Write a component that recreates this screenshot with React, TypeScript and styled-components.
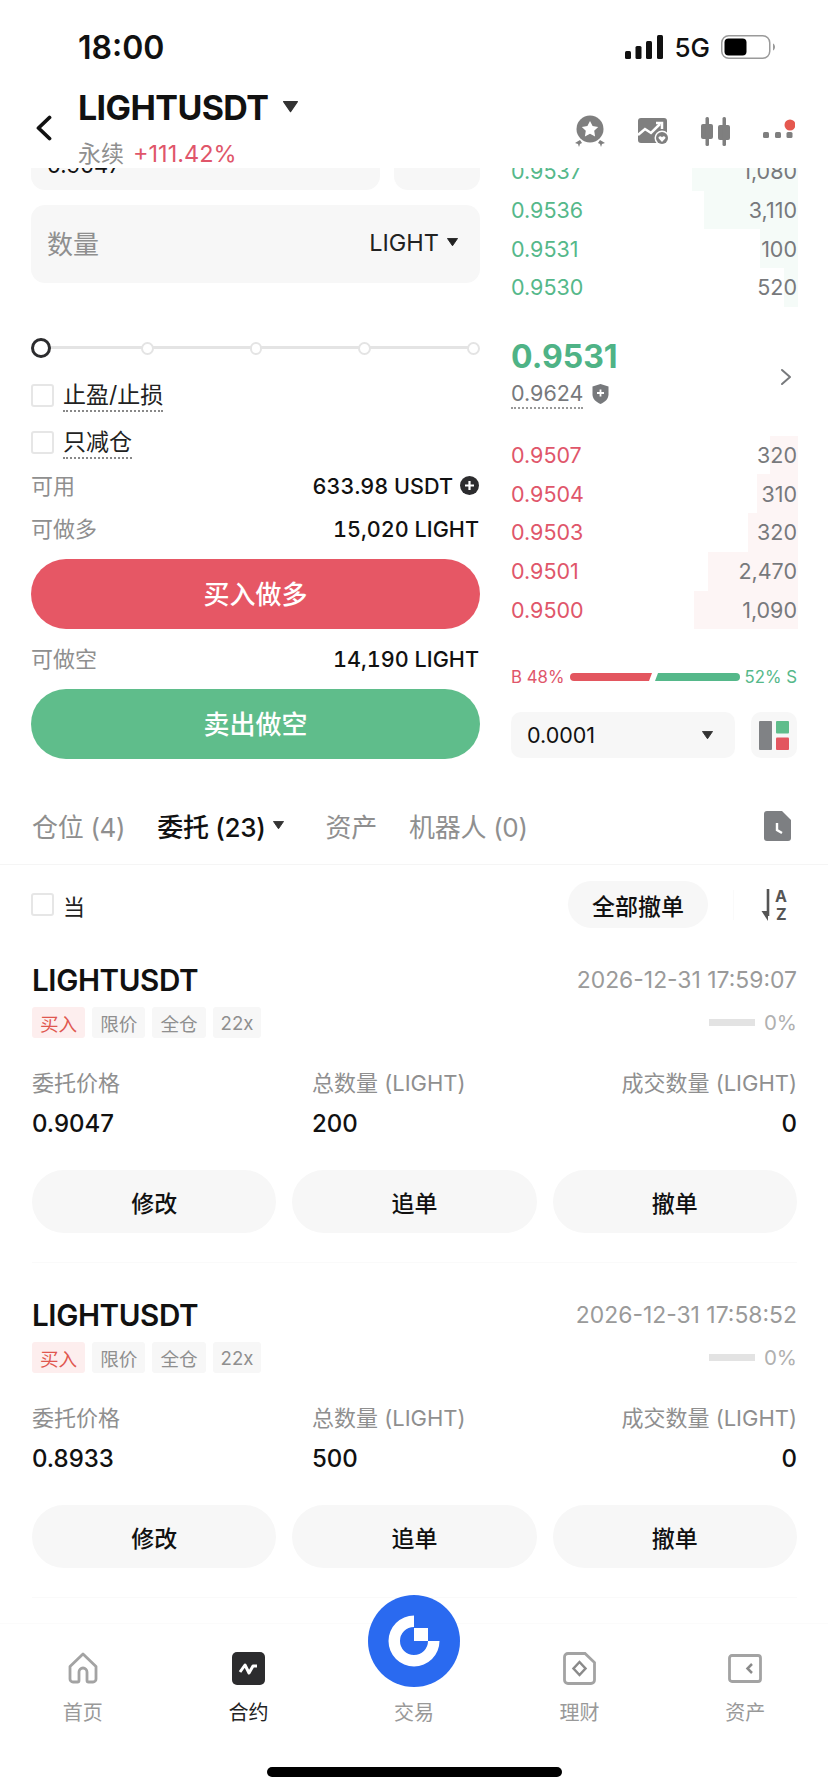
import React from 'react';
import styled, { createGlobalStyle } from 'styled-components';

const RED = '#e0566a';
const GREEN = '#55b88a';
const GRAY = '#8f8f8f';
const SOFT = '#f7f7f7';

const GlobalStyle = createGlobalStyle`
  html, body {
    margin: 0;
    padding: 0;
    background: #fff;
  }
  * {
    box-sizing: border-box;
  }
`;

const bids = [
  { price: '0.9537', size: '1,080', depth: 106 },
  { price: '0.9536', size: '3,110', depth: 94 },
  { price: '0.9531', size: '100', depth: 38 },
  { price: '0.9530', size: '520', depth: 14 },
];

const asks = [
  { price: '0.9507', size: '320', depth: 28 },
  { price: '0.9504', size: '310', depth: 41 },
  { price: '0.9503', size: '320', depth: 50 },
  { price: '0.9501', size: '2,470', depth: 90 },
  { price: '0.9500', size: '1,090', depth: 104 },
];

const orders = [
  { time: '2026-12-31 17:59:07', price: '0.9047', amount: '200' },
  { time: '2026-12-31 17:58:52', price: '0.8933', amount: '500' },
];

const Caret = ({ size = 12, color = '#333' }: { size?: number; color?: string }) => (
  <svg width={size} height={size * 0.75} viewBox="0 0 12 9">
    <path d="M0.5 0.5h11L6 8.5z" fill={color} stroke={color} strokeLinejoin="round" />
  </svg>
);

const App: React.FC = () => {
  return (
    <Page>
      <GlobalStyle />
      <StatusBar>
        <Clock>18:00</Clock>
        <StatusRight>
          <svg width="38" height="24" viewBox="0 0 38 24">
            <rect x="0" y="16" width="6" height="8" rx="1.5" fill="#111" />
            <rect x="10.5" y="11" width="6" height="13" rx="1.5" fill="#111" />
            <rect x="21" y="6" width="6" height="18" rx="1.5" fill="#111" />
            <rect x="32" y="0" width="6" height="24" rx="1.5" fill="#111" />
          </svg>
          <Network>5G</Network>
          <svg width="54" height="24" viewBox="0 0 54 24">
            <rect x="0.75" y="0.75" width="48" height="22.5" rx="7" fill="none" stroke="#9a9a9a" strokeWidth="1.5" />
            <rect x="3.5" y="3.5" width="22" height="17" rx="4" fill="#000" />
            <path d="M52 8.5c1.4.6 2 2 2 3.5s-.6 2.9-2 3.5z" fill="#9a9a9a" />
          </svg>
        </StatusRight>
      </StatusBar>

      <Header>
        <BackIcon width="20" height="26" viewBox="0 0 20 26">
          <path d="M15.5 2.5 4.5 13l11 10.5" fill="none" stroke="#111" strokeWidth="3.8" strokeLinecap="round" strokeLinejoin="round" />
        </BackIcon>
        <HeaderTitle>
          <SymbolRow>
            <Symbol>LIGHTUSDT</Symbol>
            <Caret size={15} color="#333" />
          </SymbolRow>
          <SubRow>
            <SubLabel>永续</SubLabel>
            <Change>+111.42%</Change>
          </SubRow>
        </HeaderTitle>
        <HeaderIcons>
          <svg width="34" height="34" viewBox="0 0 34 34">
            <circle cx="17" cy="14" r="13.5" fill="#7f7f7f" />
            <path d="M17 6l2.6 5.1 5.6.8-4 3.900.9 5.600-5.100-2.600-5.100 2.600.9-5.600-4-3.900 5.600-.8z" fill="#fff" />
            <path d="M2 28l5-3 2 3-2 1-1 3-1-3zM32 28l-5-3-2 3 2 1 1 3 1-3z" fill="#7f7f7f" />
          </svg>
          <svg width="32" height="28" viewBox="0 0 32 28">
            <rect x="0" y="0" width="29" height="25" rx="3" fill="#7f7f7f" />
            <path d="M0 17l7-6 6 4 9-9" fill="none" stroke="#fff" strokeWidth="2.5" />
            <path d="M18 5h6v6" fill="none" stroke="#fff" strokeWidth="2.5" />
            <circle cx="24" cy="20" r="7.5" fill="#fff" />
            <circle cx="24" cy="20" r="6" fill="#7f7f7f" />
            <path d="M24 24l-3.2-3.4c-1.2-1.7 1.600-3.400 3.200-1.400 1.600-2 4.400-.3 3.200 1.400z" fill="#fff" />
          </svg>
          <svg width="30" height="30" viewBox="0 0 30 30">
            <rect x="0" y="7" width="12" height="15" rx="2" fill="#7f7f7f" />
            <rect x="4.5" y="0" width="3.5" height="29" rx="1.5" fill="#7f7f7f" />
            <rect x="17" y="8" width="12" height="15" rx="2" fill="#7f7f7f" />
            <rect x="21.5" y="0" width="3.5" height="29" rx="1.5" fill="#7f7f7f" />
          </svg>
          <MoreIcon width="32" height="26" viewBox="0 0 32 26">
            <rect x="0" y="13" width="6" height="6" rx="1.5" fill="#7f7f7f" />
            <rect x="12" y="13" width="6" height="6" rx="1.5" fill="#7f7f7f" />
            <rect x="23.5" y="13" width="6" height="6" rx="1.5" fill="#7f7f7f" />
            <circle cx="27" cy="6" r="5.5" fill="#e5584f" />
          </MoreIcon>
        </HeaderIcons>
      </Header>

      <Body>
        <Scrolled>
          <TradePanel>
            <FormColumn>
              <PriceRow>
                <PriceBox>0.9047</PriceBox>
                <PriceTypeBox />
              </PriceRow>
              <AmountBox>
                <AmountLabel>数量</AmountLabel>
                <AmountUnit>
                  LIGHT
                  <Caret size={11} color="#222" />
                </AmountUnit>
              </AmountBox>

              <Slider>
                <SliderHandle />
                <SliderNode />
                <SliderNode />
                <SliderNode />
                <SliderNode />
              </Slider>

              <CheckRow $first>
                <CheckBox />
                <CheckLabel>止盈/止损</CheckLabel>
              </CheckRow>
              <CheckRow>
                <CheckBox />
                <CheckLabel>只减仓</CheckLabel>
              </CheckRow>

              <InfoRow $top={18}>
                <InfoLabel>可用</InfoLabel>
                <InfoValue>
                  633.98 USDT
                  <svg width="19" height="19" viewBox="0 0 19 19">
                    <circle cx="9.5" cy="9.5" r="9.5" fill="#2c2c2e" />
                    <path d="M9.5 5v9M5 9.5h9" stroke="#fff" strokeWidth="2.2" />
                  </svg>
                </InfoValue>
              </InfoRow>
              <InfoRow $top={13}>
                <InfoLabel>可做多</InfoLabel>
                <InfoValue>15,020 LIGHT</InfoValue>
              </InfoRow>
              <TradeButton $color="#e65765">买入做多</TradeButton>
              <InfoRow $top={15}>
                <InfoLabel>可做空</InfoLabel>
                <InfoValue>14,190 LIGHT</InfoValue>
              </InfoRow>
              <TradeButton $color="#5fbd8b">卖出做空</TradeButton>
            </FormColumn>

            <BookColumn>
              {bids.map((row) => (
                <BookRow key={row.price}>
                  <Depth $color="#f5fbf8" style={{ width: row.depth }} />
                  <BookPrice $color={GREEN}>{row.price}</BookPrice>
                  <BookSize>{row.size}</BookSize>
                </BookRow>
              ))}
              <MidBlock>
                <MidLeft>
                  <LastPrice>0.9531</LastPrice>
                  <MarkRow>
                    <MarkPrice>0.9624</MarkPrice>
                    <svg width="17" height="20" viewBox="0 0 17 20">
                      <path d="M8.5 0l8 2.5v8c0 4.5-3.5 7.5-8 9.5-4.5-2-8-5-8-9.5v-8z" fill="#77797c" />
                      <path d="M8.5 5.5v7M5 9h7" stroke="#fff" strokeWidth="1.8" />
                    </svg>
                  </MarkRow>
                </MidLeft>
                <svg width="12" height="18" viewBox="0 0 12 18">
                  <path d="M2 2l8 7-8 7" fill="none" stroke="#77797c" strokeWidth="2" strokeLinecap="round" strokeLinejoin="round" />
                </svg>
              </MidBlock>
              {asks.map((row) => (
                <BookRow key={row.price}>
                  <Depth $color="#fdf5f5" style={{ width: row.depth }} />
                  <BookPrice $color={RED}>{row.price}</BookPrice>
                  <BookSize>{row.size}</BookSize>
                </BookRow>
              ))}
              <RatioRow>
                <RatioText $color={RED}>B 48%</RatioText>
                <RatioBars>
                  <svg width="170" height="8" viewBox="0 0 170 8">
                    <path d="M4 0H82L79 8H4a4 4 0 0 1 0-8z" fill="#e3565f" />
                    <path d="M88 0H166a4 4 0 0 1 0 8H85z" fill="#55b88a" />
                  </svg>
                </RatioBars>
                <RatioText $color={GREEN}>52% S</RatioText>
              </RatioRow>
              <TickRow>
                <TickSelect>
                  0.0001
                  <Caret size={11} color="#333" />
                </TickSelect>
                <LayoutButton>
                  <svg width="30" height="29" viewBox="0 0 30 29">
                    <rect x="0" y="0" width="13" height="29" rx="1" fill="#808285" />
                    <rect x="17" y="0" width="13" height="12.5" rx="1" fill="#5fbd8b" />
                    <rect x="17" y="16.5" width="13" height="12.5" rx="1" fill="#e3565f" />
                  </svg>
                </LayoutButton>
              </TickRow>
            </BookColumn>
          </TradePanel>

          <Tabs>
            <TabLabel>仓位 (4)</TabLabel>
            <TabLabel $active>
              委托 (23)
              <Caret size={11} color="#333" />
            </TabLabel>
            <TabLabel>资产</TabLabel>
            <TabLabel>机器人 (0)</TabLabel>
            <TabAction>
              <svg width="27" height="30" viewBox="0 0 27 30">
                <path d="M3 0h15l9 9v18a3 3 0 0 1-3 3H3a3 3 0 0 1-3-3V3a3 3 0 0 1 3-3z" fill="#7d7f82" />
                <path d="M13 12v7l5 3" fill="none" stroke="#fff" strokeWidth="2.4" />
              </svg>
            </TabAction>
          </Tabs>

          <FilterRow>
            <CheckBox />
            <FilterLabel>当</FilterLabel>
            <FilterActions>
              <CancelAll>全部撤单</CancelAll>
              <Separator />
              <svg width="30" height="32" viewBox="0 0 30 32">
                <path d="M7 0v27" stroke="#555" strokeWidth="2.6" />
                <path d="M0.5 22l6.5 10v-10z" fill="#555" />
                <text x="14" y="13" fontFamily="Inter, sans-serif" fontSize="16" fontWeight="700" fill="#555">A</text>
                <text x="15" y="31" fontFamily="Inter, sans-serif" fontSize="16" fontWeight="700" fill="#555">Z</text>
              </svg>
            </FilterActions>
          </FilterRow>

          {orders.map((order) => (
            <OrderCard key={order.time}>
              <OrderHead>
                <OrderSymbol>LIGHTUSDT</OrderSymbol>
                <OrderTime>{order.time}</OrderTime>
              </OrderHead>
              <TagRow>
                <Tag $buy>买入</Tag>
                <Tag>限价</Tag>
                <Tag>全仓</Tag>
                <Tag>22x</Tag>
                <Progress>
                  <ProgressBar />
                  0%
                </Progress>
              </TagRow>
              <Figures>
                <FigureLabel>委托价格</FigureLabel>
                <FigureLabel>总数量 (LIGHT)</FigureLabel>
                <FigureLabel $right>成交数量 (LIGHT)</FigureLabel>
                <FigureValue>{order.price}</FigureValue>
                <FigureValue>{order.amount}</FigureValue>
                <FigureValue $right>0</FigureValue>
              </Figures>
              <OrderActions>
                <OrderButton>修改</OrderButton>
                <OrderButton>追单</OrderButton>
                <OrderButton>撤单</OrderButton>
              </OrderActions>
            </OrderCard>
          ))}
        </Scrolled>
      </Body>

      <NavBar>
        <NavItems>
          <NavItem>
            <NavIcon>
              <svg width="32" height="32" viewBox="0 0 32 32">
                <path d="M16 2 3 14.5V27a3 3 0 0 0 3 3h4.5c.9 0 1.500-.6 1.500-1.500V20a4 4 0 0 1 8 0v8.500c0 .9.600 1.500 1.500 1.500H26a3 3 0 0 0 3-3V14.500z" fill="none" stroke="#a3a3a3" strokeWidth="2.8" strokeLinejoin="round" />
              </svg>
            </NavIcon>
            <NavLabel>首页</NavLabel>
          </NavItem>
          <NavItem>
            <NavIcon>
              <svg width="33" height="33" viewBox="0 0 33 33">
                <rect width="33" height="33" rx="5" fill="#2c2c2e" />
                <path d="M8 20l5-7 4 8 4-7h4" fill="none" stroke="#fff" strokeWidth="3" strokeLinejoin="round" />
              </svg>
            </NavIcon>
            <NavLabel $active>合约</NavLabel>
          </NavItem>
          <NavItem>
            <TradeLogo>
              <svg width="54" height="54" viewBox="-27 -27 54 54">
                <path d="M0 -25.5A25.5 25.5 0 1 0 25.5 0H14A14 14 0 1 1 0 -14z" fill="#fff" />
                <rect x="0" y="-13" width="14" height="13" fill="#fff" />
              </svg>
            </TradeLogo>
            <NavIcon />
            <NavLabel>交易</NavLabel>
          </NavItem>
          <NavItem>
            <NavIcon>
              <svg width="33" height="33" viewBox="0 0 33 33">
                <path d="M5 1.5h17l9.5 9V28a3.5 3.5 0 0 1-3.5 3.5H5A3.5 3.5 0 0 1 1.5 28V5A3.5 3.5 0 0 1 5 1.5z" fill="none" stroke="#a3a3a3" strokeWidth="2.8" />
                <path d="M16.5 10l6 6.5-6 6.5-6-6.5z" fill="none" stroke="#8a8a8a" strokeWidth="2.5" />
              </svg>
            </NavIcon>
            <NavLabel>理财</NavLabel>
          </NavItem>
          <NavItem>
            <NavIcon>
              <svg width="34" height="29" viewBox="0 0 34 29">
                <rect x="1.5" y="1.5" width="31" height="26" rx="2.5" fill="none" stroke="#a3a3a3" strokeWidth="2.8" />
                <path d="M24 10l-4.5 4.5L24 19" fill="none" stroke="#8a8a8a" strokeWidth="2.5" />
              </svg>
            </NavIcon>
            <NavLabel>资产</NavLabel>
          </NavItem>
        </NavItems>
        <HomeBar />
      </NavBar>
    </Page>
  );
};

export default App;

const Page = styled.div`
  position: relative;
  width: 828px;
  height: 1792px;
  display: flex;
  flex-direction: column;
  overflow: hidden;
  background: #fff;
  color: #111;
  font-family: Inter, 'Noto Sans CJK SC', sans-serif;
`;

const StatusBar = styled.div`
  height: 88px;
  padding: 29px 53px 0 78px;
  display: flex;
  justify-content: space-between;
  align-items: flex-start;
  flex-shrink: 0;
`;

const Clock = styled.div`
  font-size: 32px;
  font-weight: 600;
  line-height: 38px;
  color: #111;
`;

const StatusRight = styled.div`
  display: flex;
  align-items: center;
  gap: 11px;
  height: 24px;
  margin-top: 6px;
`;

const Network = styled.span`
  font-size: 26px;
  font-weight: 500;
  color: #111;
`;

const Header = styled.div`
  height: 80px;
  padding-left: 34px;
  position: relative;
  display: flex;
  flex-shrink: 0;
`;

const BackIcon = styled.svg`
  margin-top: 27px;
  flex-shrink: 0;
`;

const HeaderTitle = styled.div`
  margin-left: 24px;
`;

const SymbolRow = styled.div`
  display: flex;
  align-items: center;
  gap: 15px;
  height: 36px;
  margin-top: 1px;
`;

const Symbol = styled.div`
  font-size: 34px;
  font-weight: 700;
  letter-spacing: -0.6px;
`;

const SubRow = styled.div`
  display: flex;
  align-items: center;
  gap: 9px;
  margin-top: 13px;
  height: 28px;
`;

const SubLabel = styled.span`
  font-size: 23px;
  color: ${GRAY};
`;

const Change = styled.span`
  font-size: 23.5px;
  margin-top: 2px;
  color: ${RED};
`;

const HeaderIcons = styled.div`
  margin-left: auto;
  margin-right: 33px;
  height: 52px;
  display: flex;
  align-items: center;
  gap: 31px;
  margin-top: 18px;
`;

const MoreIcon = styled.svg`
  margin-left: 1px;
`;

const Body = styled.div`
  flex: 1;
  overflow: hidden;
  min-height: 0;
`;

const Scrolled = styled.div`
  margin-top: -28px;
`;

const TradePanel = styled.div`
  display: grid;
  grid-template-columns: 449px 286px;
  column-gap: 31px;
  padding-left: 31px;
`;

const FormColumn = styled.div`
  display: flex;
  flex-direction: column;
`;

const PriceRow = styled.div`
  display: flex;
  gap: 14px;
  height: 50px;
`;

const PriceBox = styled.div`
  flex: 1;
  background: ${SOFT};
  border-radius: 0 0 14px 14px;
  padding-left: 16px;
  display: flex;
  align-items: center;
  font-size: 22px;
`;

const PriceTypeBox = styled.div`
  width: 86px;
  background: ${SOFT};
  border-radius: 0 0 14px 14px;
`;

const AmountBox = styled.div`
  height: 78px;
  margin-top: 15px;
  padding: 0 22px 4px 16px;
  background: ${SOFT};
  border-radius: 14px;
  display: flex;
  justify-content: space-between;
  align-items: center;
`;

const AmountLabel = styled.span`
  font-size: 26px;
  color: ${GRAY};
`;

const AmountUnit = styled.span`
  display: flex;
  align-items: center;
  gap: 8px;
  font-size: 23.5px;
  color: #222;
`;

const Slider = styled.div`
  margin-top: 55px;
  height: 20px;
  display: flex;
  align-items: center;
  gap: 96px;
  position: relative;

  &::before {
    content: '';
    position: absolute;
    left: 10px;
    right: 6px;
    top: 8px;
    height: 3px;
    background: #e4e4e4;
  }
`;

const SliderHandle = styled.span`
  position: relative;
  width: 20px;
  height: 20px;
  margin-right: -6px;
  border-radius: 50%;
  border: 3px solid #2c2c2e;
  background: #fff;
`;

const SliderNode = styled.span`
  position: relative;
  width: 13px;
  height: 13px;
  border-radius: 50%;
  border: 2px solid #e4e4e4;
  background: #fff;
`;

const CheckRow = styled.div<{ $first?: boolean }>`
  display: flex;
  align-items: center;
  gap: 9px;
  margin-top: ${(p) => (p.$first ? 26 : 25)}px;
  height: 22px;
`;

const CheckBox = styled.span`
  width: 23px;
  height: 23px;
  flex-shrink: 0;
  border: 2px solid #e6e6e6;
  border-radius: 3px;
  background: #fff;
`;

const CheckLabel = styled.span`
  font-size: 23px;
  line-height: 29px;
  color: #222;
  border-bottom: 2px dotted #888;
  margin-top: 2px;
`;

const InfoRow = styled.div<{ $top: number }>`
  display: flex;
  justify-content: space-between;
  align-items: center;
  height: 30px;
  padding-bottom: 4px;
  margin-top: ${(p) => p.$top}px;
`;

const InfoLabel = styled.span`
  font-size: 22px;
  color: ${GRAY};
`;

const InfoValue = styled.span`
  display: flex;
  align-items: center;
  gap: 7px;
  margin-top: 3px;
  font-size: 21.6px;
  font-weight: 500;
  font-variant-numeric: tabular-nums;
  color: #111;
  padding-right: 1px;
`;

const TradeButton = styled.div<{ $color: string }>`
  height: 70px;
  margin-top: 15px;
  padding-bottom: 4px;
  border-radius: 35px;
  background: ${(p) => p.$color};
  color: #fff;
  font-size: 26px;
  font-weight: 500;
  display: flex;
  align-items: center;
  justify-content: center;
`;

const BookColumn = styled.div`
  padding-top: 12px;
  display: flex;
  flex-direction: column;
`;

const BookRow = styled.div`
  position: relative;
  height: 38.7px;
  display: flex;
  justify-content: space-between;
  align-items: center;
  font-size: 21.5px;
`;

const Depth = styled.div<{ $color: string }>`
  position: absolute;
  top: 0;
  bottom: 0;
  right: -1px;
  background: ${(p) => p.$color};
`;

const BookPrice = styled.span<{ $color: string }>`
  position: relative;
  color: ${(p) => p.$color};
`;

const BookSize = styled.span`
  position: relative;
  color: #77797c;
`;

const MidBlock = styled.div`
  height: 129px;
  padding: 31px 5px 0 0;
  display: flex;
  justify-content: space-between;
  align-items: flex-start;

  > svg {
    margin-top: 30px;
    flex-shrink: 0;
  }
`;

const MidLeft = styled.div`
  display: flex;
  flex-direction: column;
`;

const LastPrice = styled.div`
  font-size: 32px;
  line-height: 38px;
  font-weight: 700;
  color: #4fb386;
`;

const MarkRow = styled.div`
  display: flex;
  align-items: center;
  gap: 9px;
  margin-top: 3px;
`;

const MarkPrice = styled.span`
  font-size: 21.5px;
  line-height: 28px;
  color: #77797c;
  border-bottom: 2px dotted #999;
`;

const RatioRow = styled.div`
  margin-top: 38px;
  height: 20px;
  display: flex;
  justify-content: space-between;
  align-items: center;
`;

const RatioText = styled.span<{ $color: string }>`
  font-size: 16.8px;
  color: ${(p) => p.$color};
`;

const RatioBars = styled.div`
  display: flex;
`;

const TickRow = styled.div`
  margin-top: 25px;
  display: flex;
  justify-content: space-between;
`;

const TickSelect = styled.div`
  width: 224px;
  height: 46px;
  padding: 0 22px 0 16px;
  border-radius: 10px;
  background: ${SOFT};
  display: flex;
  justify-content: space-between;
  align-items: center;
  font-size: 21.5px;
  color: #111;
`;

const LayoutButton = styled.div`
  width: 46px;
  height: 46px;
  border-radius: 10px;
  background: ${SOFT};
  display: flex;
  align-items: center;
  justify-content: center;
`;

const Tabs = styled.div`
  height: 106px;
  padding: 28px 37px 0 32px;
  display: flex;
  align-items: center;
  gap: 32px;
  border-bottom: 1px solid #f5f5f5;
`;

const TabLabel = styled.span<{ $active?: boolean }>`
  display: flex;
  align-items: center;
  gap: 7px;
  font-size: 26px;
  font-weight: ${(p) => (p.$active ? 500 : 400)};
  color: ${(p) => (p.$active ? '#111' : GRAY)};
  white-space: nowrap;
  letter-spacing: -0.3px;
  margin-right: ${(p) => (p.$active ? 10 : 0)}px;
`;

const TabAction = styled.div`
  margin-left: auto;
  display: flex;
`;

const FilterRow = styled.div`
  padding: 16px 37px 0 31px;
  display: flex;
  align-items: center;
`;

const FilterLabel = styled.span`
  margin-left: 9px;
  font-size: 22px;
  color: #222;
`;

const FilterActions = styled.div`
  margin-left: auto;
  display: flex;
  align-items: center;
`;

const CancelAll = styled.div`
  width: 140px;
  height: 47px;
  border-radius: 24px;
  background: ${SOFT};
  display: flex;
  align-items: center;
  justify-content: center;
  font-size: 23px;
  font-weight: 500;
`;

const Separator = styled.span`
  width: 1px;
  height: 30px;
  margin: 0 27px 0 25px;
  background: #fafafa;
`;

const OrderCard = styled.div`
  height: 335px;
  margin: 0 31px 0 32px;
  padding-top: 36px;
  border-bottom: 1px solid #fafafa;
`;

const OrderHead = styled.div`
  height: 32px;
  display: flex;
  justify-content: space-between;
  align-items: center;
`;

const OrderSymbol = styled.span`
  font-size: 29.6px;
  font-weight: 600;
  letter-spacing: -0.4px;
`;

const OrderTime = styled.span`
  font-size: 22.9px;
  color: #9a9a9a;
`;

const TagRow = styled.div`
  height: 31px;
  margin-top: 11px;
  display: flex;
  align-items: center;
  gap: 7px;
`;

const Tag = styled.span<{ $buy?: boolean }>`
  height: 31px;
  padding: 0 8px;
  border-radius: 3px;
  display: flex;
  align-items: center;
  font-size: 18.6px;
  background: ${(p) => (p.$buy ? '#fdeeee' : SOFT)};
  color: ${(p) => (p.$buy ? '#e0574f' : GRAY)};
`;

const Progress = styled.span`
  margin-left: auto;
  display: flex;
  align-items: center;
  gap: 9px;
  font-size: 20.5px;
  color: #b0b0b0;
`;

const ProgressBar = styled.span`
  width: 46px;
  height: 7px;
  background: #e3e3e3;
`;

const Figures = styled.div`
  margin-top: 31px;
  display: grid;
  grid-template-columns: 280px 1fr auto;
  grid-template-rows: 30px 30px;
  row-gap: 9px;
  align-items: center;
`;

const FigureLabel = styled.span<{ $right?: boolean }>`
  font-size: 22px;
  line-height: 26px;
  padding-bottom: 3px;
  color: ${GRAY};
  text-align: ${(p) => (p.$right ? 'right' : 'left')};
`;

const FigureValue = styled.span<{ $right?: boolean }>`
  font-size: 24px;
  font-weight: 500;
  color: #111;
  text-align: ${(p) => (p.$right ? 'right' : 'left')};
`;

const OrderActions = styled.div`
  margin-top: 32px;
  display: grid;
  grid-template-columns: repeat(3, 1fr);
  gap: 16px;
`;

const OrderButton = styled.div`
  height: 63px;
  border-radius: 32px;
  background: ${SOFT};
  display: flex;
  align-items: center;
  justify-content: center;
  font-size: 23px;
  font-weight: 500;
`;

const NavBar = styled.div`
  position: relative;
  height: 169px;
  flex-shrink: 0;
  background: #fff;
  border-top: 1px solid #fbfbfb;
`;

const NavItems = styled.div`
  display: grid;
  grid-template-columns: repeat(5, 1fr);
  padding-top: 27px;
`;

const NavItem = styled.div`
  position: relative;
  display: flex;
  flex-direction: column;
  align-items: center;
`;

const NavIcon = styled.div`
  height: 34px;
  display: flex;
  align-items: center;
  justify-content: center;
`;

const NavLabel = styled.span<{ $active?: boolean }>`
  margin-top: 14px;
  font-size: 20px;
  line-height: 28px;
  color: ${(p) => (p.$active ? '#222' : '#999')};
`;

const TradeLogo = styled.div`
  position: absolute;
  top: -56px;
  left: 50%;
  width: 92px;
  height: 92px;
  margin-left: -46px;
  border-radius: 50%;
  background: #2a6af0;
  display: flex;
  align-items: center;
  justify-content: center;
`;

const HomeBar = styled.div`
  position: absolute;
  left: 267px;
  bottom: 15px;
  width: 295px;
  height: 10px;
  border-radius: 5px;
  background: #000;
`;
